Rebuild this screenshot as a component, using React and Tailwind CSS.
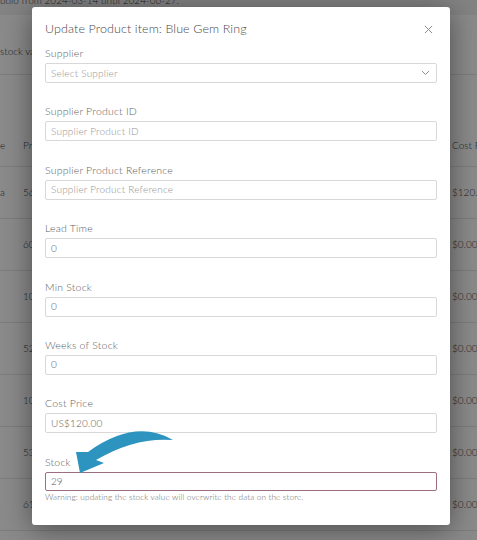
import React from "react";

const fields = [
  { label: "Supplier Product ID", value: "", placeholder: "Supplier Product ID" },
  { label: "Supplier Product Reference", value: "", placeholder: "Supplier Product Reference" },
  { label: "Lead Time", value: "0" },
  { label: "Min Stock", value: "0" },
  { label: "Weeks of Stock", value: "0" },
  { label: "Cost Price", value: "US$120.00" },
];

const rows = [
  ["56", "$120.00"],
  ["60", "$0.00"],
  ["10", "$0.00"],
  ["52", "$0.00"],
  ["10", "$0.00"],
  ["53", "$0.00"],
  ["61", "$0.00"],
];

function Field({ label, value, placeholder }) {
  return (
    <div className="mb-[22.4px]">
      <div className="h-[12px] leading-[12px] text-[10.5px] text-[#5e5e5e] mb-[4px] tracking-[0.2px]">{label}</div>
      <div
        className={`h-[20px] rounded-[2px] border border-[#d8d8d8] flex items-center px-[5px] text-[10px] tracking-[0.2px] ${
          value ? "text-[#5a5a5a]" : "text-[#949494]"
        }`}
      >
        {value || placeholder}
      </div>
    </div>
  );
}

export default function App() {
  return (
    <div
      className="relative w-[477px] h-[540px] overflow-hidden bg-white font-light"
      style={{ fontFamily: "Lato, 'Noto Sans', sans-serif" }}
    >
      {/* Background page */}
      <div className="text-[10px] text-[#3a3a3a]">
        <div className="h-[15px] bg-[#f2f2f2] overflow-hidden">
          <div className="-mt-[6px] leading-[12px] whitespace-nowrap">udio from 2024-03-14 until 2024-06-27.</div>
        </div>
        <div className="h-[60px] border-b border-[#e6e6e6] flex items-center whitespace-nowrap pt-[14px]">
          <span className="w-[60px] overflow-hidden">stock value</span>
        </div>
        <div className="h-[92px] border-b border-[#e6e6e6] flex items-end pb-[13px]">
          <span className="w-[23px] overflow-hidden">e</span>
          <span className="flex-1">Product</span>
          <span className="w-[25px] overflow-hidden whitespace-nowrap">Cost P</span>
        </div>
        {rows.map((r, i) => (
          <div key={i} className="h-[52px] border-b border-[#e6e6e6] flex items-center">
            <span className="w-[23px] overflow-hidden">{i === 0 ? "a" : ""}</span>
            <span className="flex-1">{r[0]}</span>
            <span className="w-[25px] overflow-hidden whitespace-nowrap">{r[1]}</span>
          </div>
        ))}
      </div>

      {/* Overlay */}
      <div className="absolute inset-0 bg-black/[0.46]" />

      {/* Modal */}
      <div className="absolute left-[32px] top-[7px] w-[418px] h-[518px] bg-white rounded-[3px] shadow-[0_4px_28px_rgba(0,0,0,0.45)] px-[13px] pt-[14px]">
        <div className="flex items-center justify-between h-[16px]">
          <div className="text-[12.5px] text-[#4a4a4a] tracking-[0.1px]">Update Product item: Blue Gem Ring</div>
          <svg width="9" height="9" viewBox="0 0 10 10" className="mr-[4px]" stroke="#8a8a8a" strokeWidth="1.1">
            <path d="M1 1 L9 9 M9 1 L1 9" />
          </svg>
        </div>
        <div className="mt-[10px]">
          <div className="mb-[22.4px]">
            <div className="h-[12px] leading-[12px] text-[10.5px] text-[#5e5e5e] mb-[4px] tracking-[0.2px]">Supplier</div>
            <div className="h-[20px] rounded-[2px] border border-[#d8d8d8] flex items-center justify-between px-[5px] text-[10px] tracking-[0.2px] text-[#949494]">
              <span>Select Supplier</span>
              <svg width="9" height="6" viewBox="0 0 9 6" fill="none" stroke="#8a8a8a" strokeWidth="1" className="mr-[1px]">
                <path d="M1 1 L4.5 4.5 L8 1" />
              </svg>
            </div>
          </div>
          {fields.map((f) => (
            <Field key={f.label} {...f} />
          ))}
          <div>
            <div className="h-[12px] leading-[12px] text-[10.5px] text-[#5e5e5e] mb-[4px] tracking-[0.2px]">Stock</div>
            <div className="h-[19px] rounded-[2px] border border-[#9c6f80] flex items-center px-[5px] text-[10px] text-[#5a5a5a]">
              29
            </div>
            <div className="text-[8.2px] text-[#6a6a6a] mt-[1px] leading-[10px] tracking-[0.15px]">
              Warning: updating the stock value will overwrite the data on the store.
            </div>
          </div>
        </div>
      </div>

      {/* Arrow annotation */}
      <svg className="absolute left-0 top-0 pointer-events-none" width="477" height="540" viewBox="0 0 477 540">
        <path
          d="M 173 440 Q 135 418 88 452 L 76 452 L 80 473 L 104 463 L 96 460 Q 135 437 173 440 Z"
          fill="#2d94c0"
        />
      </svg>
    </div>
  );
}
